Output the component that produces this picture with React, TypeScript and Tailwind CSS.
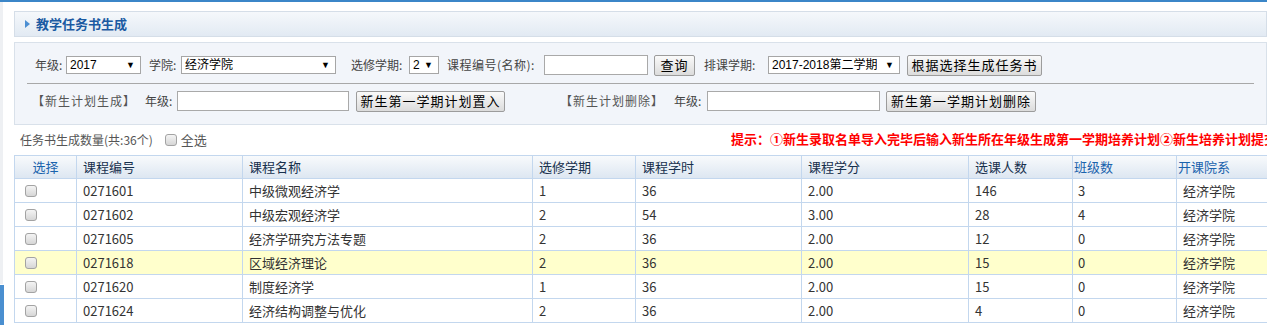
import React from 'react';

const rows = [
  { sel: false, code: '0271601', name: '中级微观经济学', term: '1', hours: '36', credit: '2.00', count: '146', classes: '3', dept: '经济学院' },
  { sel: false, code: '0271602', name: '中级宏观经济学', term: '2', hours: '54', credit: '3.00', count: '28', classes: '4', dept: '经济学院' },
  { sel: false, code: '0271605', name: '经济学研究方法专题', term: '2', hours: '36', credit: '2.00', count: '12', classes: '0', dept: '经济学院' },
  { sel: true, code: '0271618', name: '区域经济理论', term: '2', hours: '36', credit: '2.00', count: '15', classes: '0', dept: '经济学院' },
  { sel: false, code: '0271620', name: '制度经济学', term: '1', hours: '36', credit: '2.00', count: '15', classes: '0', dept: '经济学院' },
  { sel: false, code: '0271624', name: '经济结构调整与优化', term: '2', hours: '36', credit: '2.00', count: '4', classes: '0', dept: '经济学院' },
];

const Select = ({ value, width }: { value: string; width: string }) => (
  <div className={`${width} h-[18px] flex items-center justify-between border border-[#a6a6a6] bg-white pl-[3px] pr-[5px] text-[12px] text-black font-['Liberation_Sans','Noto_Sans_CJK_SC',sans-serif]`}>
    <span className="whitespace-nowrap overflow-hidden">{value}</span>
    <span className="text-[9px] leading-none">▼</span>
  </div>
);

const Btn = ({ children, width }: { children: React.ReactNode; width: string }) => (
  <div className={`${width} h-[21px] flex items-center justify-center rounded-[2px] border border-[#9c9c9c] bg-gradient-to-b from-[#fafafa] to-[#dcdcdc] text-[13px] text-black tracking-[1px] whitespace-nowrap`}>
    {children}
  </div>
);

const Box = () => (
  <span className="inline-block w-[12px] h-[12px] rounded-[3px] border border-[#a3a3a3] bg-gradient-to-b from-[#f4f4f4] to-[#d6d6d6]" />
);

const cols = ['w-[62px]', 'w-[166px]', 'w-[290px]', 'w-[103px]', 'w-[166px]', 'w-[167px]', 'w-[104px]', 'w-[104px]', 'w-[100px]'];

const App = () => {
  return (
    <div className="relative w-[1267px] h-[325px] overflow-hidden bg-white font-['Noto_Sans_CJK_SC',sans-serif] text-[12px] text-[#444]">
      <div className="h-[2px] bg-[#3b86c8]" />
      {/* left edge strip and side tab */}
      <div className="absolute left-0 top-[2px] w-[3px] h-[282px] bg-[#eef0f3]" />
      <div className="absolute left-0 top-[285px] w-[4px] h-[40px] bg-[#4a8fd0]" />

      <div className="ml-[14px] pt-[9px]">
        {/* title bar */}
        <div className="h-[26px] flex items-center border border-[#d5dee8] bg-gradient-to-b from-[#f5f8fb] to-[#e2eaf3] pl-[10px]">
          <span className="w-0 h-0 border-y-[4px] border-y-transparent border-l-[5px] border-l-[#4b8ed2]" />
          <span className="ml-[6px] text-[13px] font-bold text-[#1b5aa2]">教学任务书生成</span>
        </div>

        {/* filter panel */}
        <div className="mt-[5px] h-[83px] border border-[#d9e1ea] bg-[#f2f5fa] px-[12px] pt-[12px]">
          <div className="flex items-center h-[20px] pl-[8px]">
            <span className="w-[31px]">年级:</span>
            <Select value="2017" width="w-[75px]" />
            <span className="ml-[8px] w-[32px]">学院:</span>
            <Select value="经济学院" width="w-[155px]" />
            <span className="ml-[15px] w-[58px]">选修学期:</span>
            <Select value="2" width="w-[30px]" />
            <span className="ml-[8px] w-[97px] whitespace-nowrap tracking-[0.5px]">课程编号(名称):</span>
            <div className="w-[104px] h-[20px] border border-[#a9a9a9] bg-white" />
            <div className="ml-[6px]"><Btn width="w-[41px]">查询</Btn></div>
            <span className="ml-[9px] w-[64px]">排课学期:</span>
            <Select value="2017-2018第二学期" width="w-[132px]" />
            <div className="ml-[7px]"><Btn width="w-[135px]">根据选择生成任务书</Btn></div>
          </div>
          <div className="mt-[8px] border-t border-[#a8a8a8]" />
          <div className="mt-[7px] flex items-center h-[20px] pl-[5px]">
            <span className="w-[113px] tracking-[1px] text-[#555]">【新生计划生成】</span>
            <span className="w-[32px]">年级:</span>
            <div className="w-[172px] h-[20px] border border-[#a9a9a9] bg-white" />
            <div className="ml-[7px]"><Btn width="w-[149px]">新生第一学期计划置入</Btn></div>
            <span className="ml-[55px] w-[114px] tracking-[1px] text-[#555]">【新生计划删除】</span>
            <span className="w-[33px]">年级:</span>
            <div className="w-[173px] h-[20px] border border-[#a9a9a9] bg-white" />
            <div className="ml-[6px]"><Btn width="w-[150px]">新生第一学期计划删除</Btn></div>
          </div>
        </div>

        {/* count + hint */}
        <div className="h-[30px] flex items-center whitespace-nowrap">
          <div className="w-[717px] shrink-0 flex items-center pl-[6px] text-[#555]">
            <span>任务书生成数量(共:36个)</span>
            <span className="ml-[12px] flex"><Box /></span>
            <span className="ml-[4px] text-[13px]">全选</span>
          </div>
          <span className="-mt-[3px] text-[13px] font-bold text-[#ff0000]">提示：①新生录取名单导入完毕后输入新生所在年级生成第一学期培养计划②新生培养计划提交后方可进行任务书生成</span>
        </div>

        {/* table */}
        <div className="overflow-hidden">
          <table className="table-fixed w-[1262px] border-collapse text-[13px] text-[#333]">
            <colgroup>
              {cols.map((c, i) => (
                <col key={i} className={c} />
              ))}
            </colgroup>
            <thead>
              <tr className="h-[23px] bg-gradient-to-b from-[#f8fafc] to-[#dce6f1]">
                <th className="border border-[#c3d7ee] font-normal text-center text-[#1a63ad]">选择</th>
                <th className="border border-[#c3d7ee] font-normal text-left pl-[6px] text-[#17304d]">课程编号</th>
                <th className="border border-[#c3d7ee] font-normal text-left pl-[6px] text-[#17304d]">课程名称</th>
                <th className="border border-[#c3d7ee] font-normal text-left pl-[6px] text-[#17304d]">选修学期</th>
                <th className="border border-[#c3d7ee] font-normal text-left pl-[6px] text-[#17304d]">课程学时</th>
                <th className="border border-[#c3d7ee] font-normal text-left pl-[6px] text-[#17304d]">课程学分</th>
                <th className="border border-[#c3d7ee] font-normal text-left pl-[6px] text-[#17304d]">选课人数</th>
                <th className="border border-[#c3d7ee] font-normal text-left pl-[1px] text-[#1a63ad]">班级数</th>
                <th className="border border-[#c3d7ee] font-normal text-left pl-[1px] text-[#1a63ad]">开课院系</th>
              </tr>
            </thead>
            <tbody>
              {rows.map((r) => (
                <tr key={r.code} className={`h-[24px] ${r.sel ? 'bg-[#ffffcc]' : 'bg-white'}`}>
                  <td className="border border-[#c3d7ee] pl-[10px]">
                    <span className="flex"><Box /></span>
                  </td>
                  <td className="border border-[#c3d7ee] pl-[6px]">{r.code}</td>
                  <td className="border border-[#c3d7ee] pl-[6px]">{r.name}</td>
                  <td className="border border-[#c3d7ee] pl-[6px]">{r.term}</td>
                  <td className="border border-[#c3d7ee] pl-[6px]">{r.hours}</td>
                  <td className="border border-[#c3d7ee] pl-[6px]">{r.credit}</td>
                  <td className="border border-[#c3d7ee] pl-[6px]">{r.count}</td>
                  <td className="border border-[#c3d7ee] pl-[5px]">{r.classes}</td>
                  <td className="border border-[#c3d7ee] pl-[6px]">{r.dept}</td>
                </tr>
              ))}
            </tbody>
          </table>
        </div>
      </div>
    </div>
  );
};

export default App;
